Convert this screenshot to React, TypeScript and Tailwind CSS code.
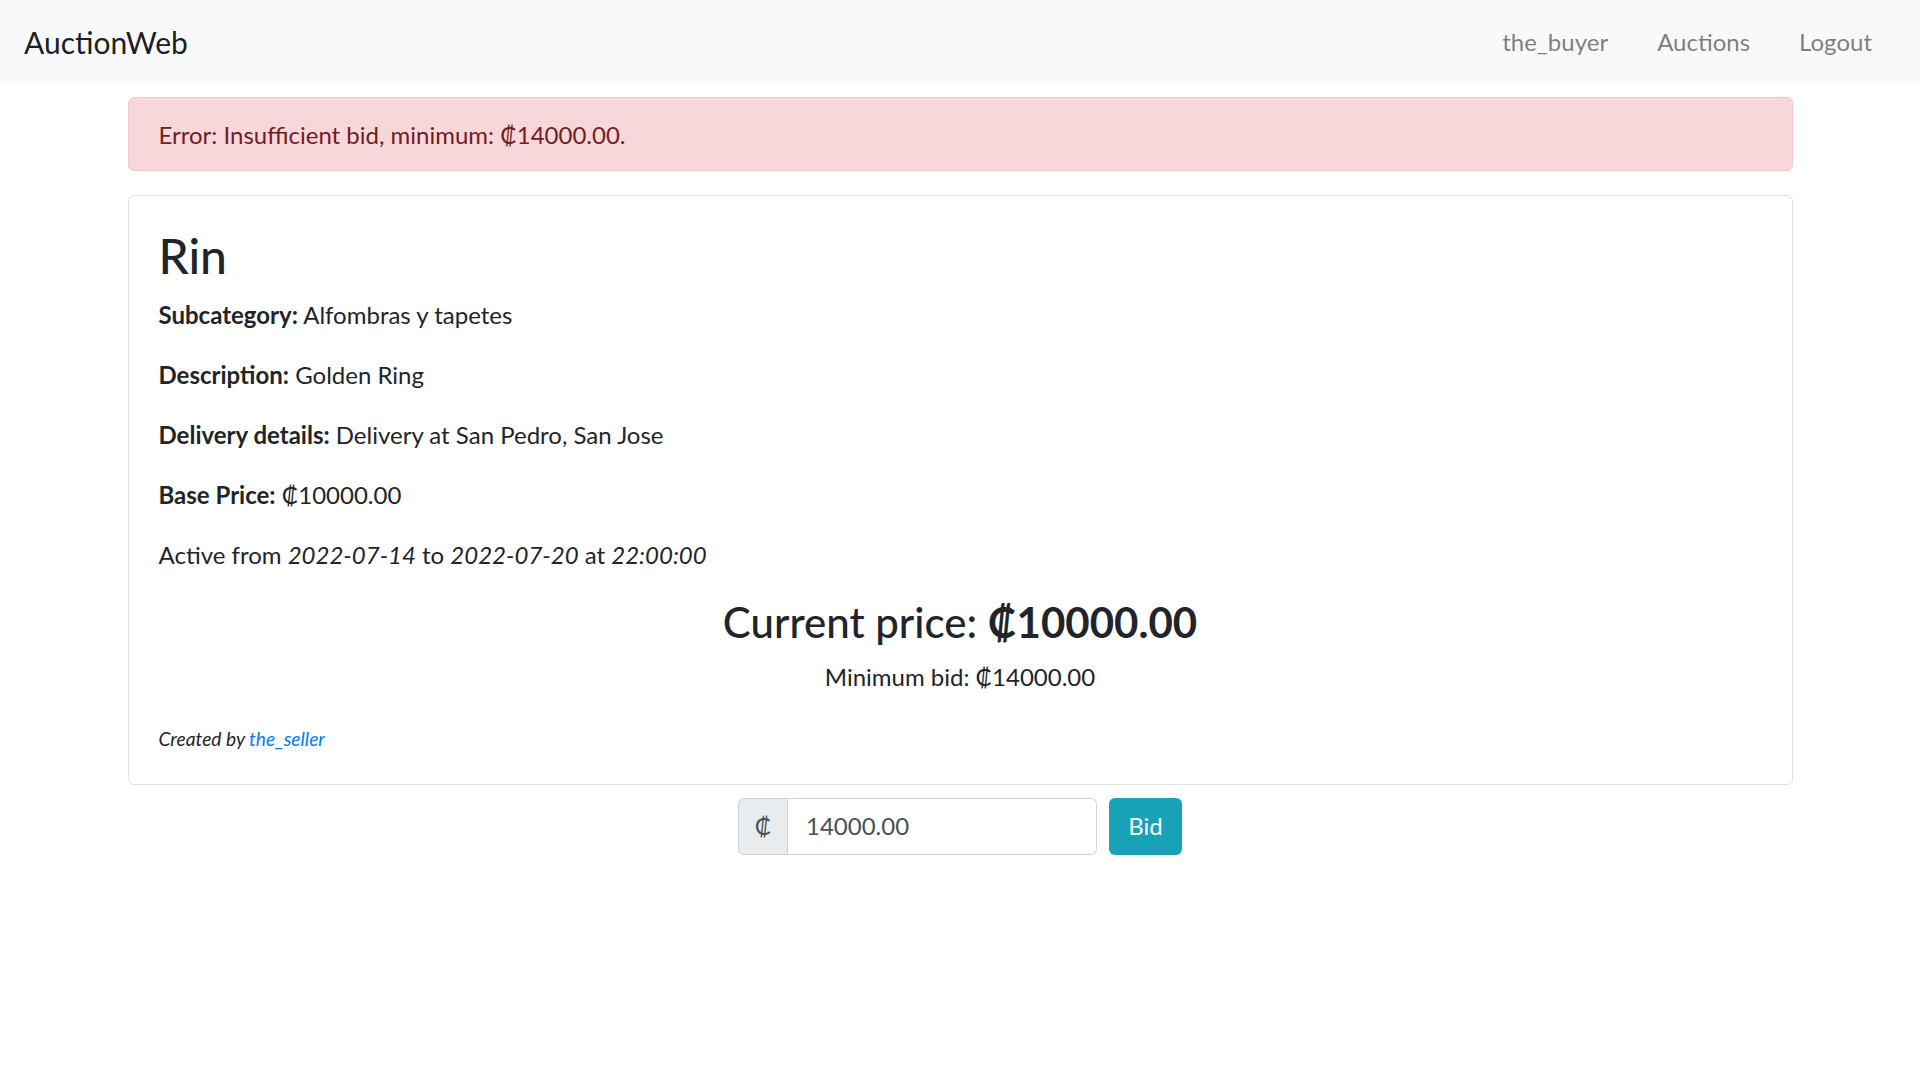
import React from "react";

export default function App() {
  const font = { fontFamily: "Lato, 'Noto Sans', 'DejaVu Sans', sans-serif" };
  return (
    <div className="min-h-[1080px] bg-white text-[#212529]" style={font}>
      <nav className="h-[84px] bg-[#f8f9fa] flex items-center justify-between pl-6 pr-[48px]">
        <span className="text-[30px] leading-[45px] text-black/90">AuctionWeb</span>
        <div className="flex items-center gap-[49px] text-[24px] leading-[36px] text-black/50">
          <a>the_buyer</a>
          <a>Auctions</a>
          <a>Logout</a>
        </div>
      </nav>
      <main className="w-[1665px] mx-auto">
        <div className="mt-[13px] mb-[24px] bg-[#f8d7da] border border-[#f5c6cb] rounded-[6px] text-[#721c24] px-[30px] pt-[19px] pb-[17px] text-[24px] leading-[36px]">
          Error: Insufficient bid, minimum: ₡14000.00.
        </div>
        <div className="border border-black/[.125] rounded-[6px] px-[30px] pt-[31px] pb-[29px]">
          <h2 className="text-[48px] leading-[1.2] font-medium mb-3">Rin</h2>
          <p className="text-[24px] leading-[36px] mb-6"><strong className="font-bold">Subcategory:</strong> Alfombras y tapetes</p>
          <p className="text-[24px] leading-[36px] mb-6"><strong className="font-bold">Description:</strong> Golden Ring</p>
          <p className="text-[24px] leading-[36px] mb-6"><strong className="font-bold">Delivery details:</strong> Delivery at San Pedro, San Jose</p>
          <p className="text-[24px] leading-[36px] mb-6"><strong className="font-bold">Base Price:</strong> ₡10000.00</p>
          <p className="text-[24px] leading-[36px] mb-6">
            Active from <em>2022-07-14</em> to <em>2022-07-20</em> at <em>22:00:00</em>
          </p>
          <h3 className="text-[42px] leading-[1.2] font-medium mb-3 text-center">
            Current price: <b className="font-bold">₡10000.00</b>
          </h3>
          <p className="text-[24px] leading-[36px] mb-6 text-center">Minimum bid: ₡14000.00</p>
          <p className="h-[36px] pt-[4px] flex items-center mb-0">
            <small className="text-[19.2px] leading-none italic">
              Created by <a className="text-[#007bff]">the_seller</a>
            </small>
          </p>
        </div>
        <div className="mt-[13px] flex justify-center">
          <div className="flex h-[57px]">
            <span className="w-[50px] flex items-center justify-center bg-[#e9ecef] border border-[#ced4da] rounded-l-[6px] text-[24px] text-[#495057]">₡</span>
            <input
              type="text"
              defaultValue="14000.00"
              className="w-[309px] border border-l-0 border-[#ced4da] rounded-r-[6px] px-[18px] text-[24px] text-[#495057] outline-none bg-white"
              style={font}
            />
          </div>
          <button className="ml-3 w-[73px] h-[57px] bg-[#17a2b8] text-white rounded-[6px] text-[24px]" style={font}>
            Bid
          </button>
        </div>
      </main>
    </div>
  );
}
